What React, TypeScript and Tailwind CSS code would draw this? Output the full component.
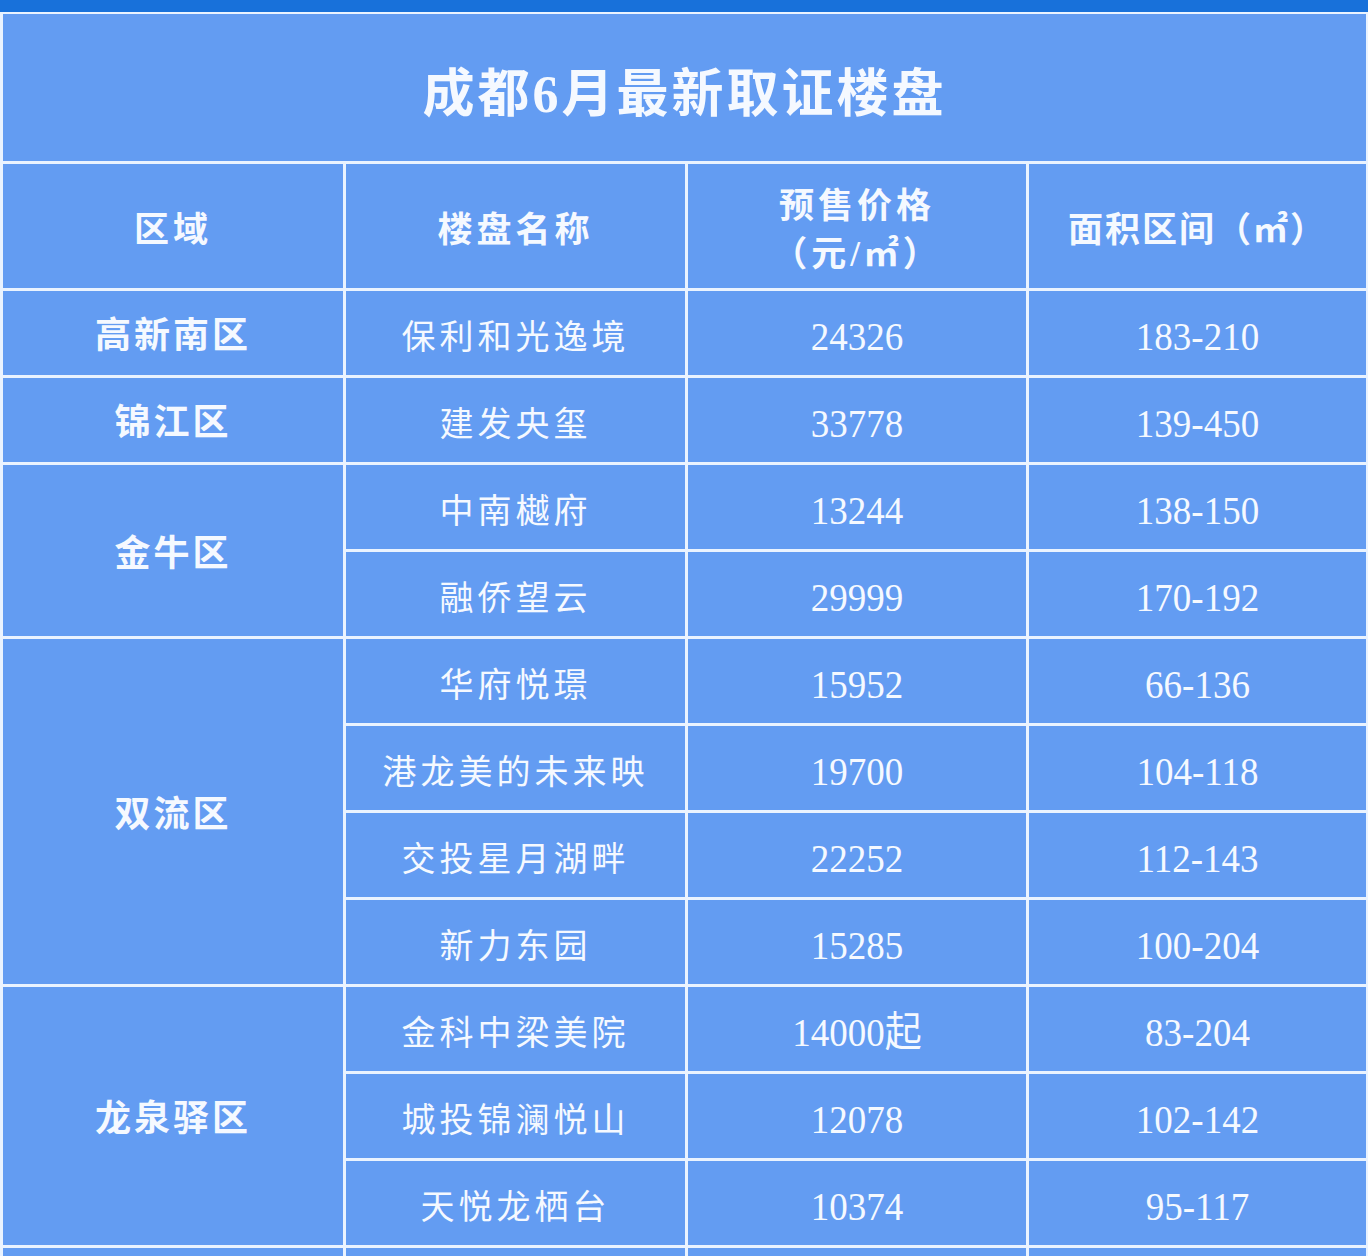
import React from 'react';

type Row = { name: string; price: string; area: string };
type Group = { region: string; rows: Row[] };

const groups: Group[] = [
  { region: '高新南区', rows: [{ name: '保利和光逸境', price: '24326', area: '183-210' }] },
  { region: '锦江区', rows: [{ name: '建发央玺', price: '33778', area: '139-450' }] },
  {
    region: '金牛区',
    rows: [
      { name: '中南樾府', price: '13244', area: '138-150' },
      { name: '融侨望云', price: '29999', area: '170-192' },
    ],
  },
  {
    region: '双流区',
    rows: [
      { name: '华府悦璟', price: '15952', area: '66-136' },
      { name: '港龙美的未来映', price: '19700', area: '104-118' },
      { name: '交投星月湖畔', price: '22252', area: '112-143' },
      { name: '新力东园', price: '15285', area: '100-204' },
    ],
  },
  {
    region: '龙泉驿区',
    rows: [
      { name: '金科中梁美院', price: '14000起', area: '83-204' },
      { name: '城投锦澜悦山', price: '12078', area: '102-142' },
      { name: '天悦龙栖台', price: '10374', area: '95-117' },
    ],
  },
];

const font = { fontFamily: '"Liberation Serif", "Noto Sans CJK SC", serif' };

const cell = 'bg-[#639cf2] flex items-center justify-center text-[#f5f9ff]';

export default function App() {
  let rowStart = 3;
  return (
    <div className="w-[1368px] h-[1256px] overflow-hidden bg-[#eaf3ff]" style={font}>
      <div className="h-[12px] bg-[#1871da]" />
      <div className="grid grid-cols-[340px_339px_338px_337px] grid-rows-[147px_124px_repeat(12,84px)] gap-[3px] p-[3px] pt-[2px]">
        {/* Title */}
        <div className={`${cell} col-span-4 text-[52px] font-bold tracking-[3px] pt-[14px]`}>
          成都6月最新取证楼盘
        </div>

        {/* Header */}
        <div className={`${cell} text-[35px] font-bold tracking-[4px] pt-[10px]`}>区域</div>
        <div className={`${cell} text-[35px] font-bold tracking-[4px] pt-[10px]`}>楼盘名称</div>
        <div className={`${cell} text-[35px] font-bold tracking-[4px] flex-col leading-[48px] pt-[10px]`}>
          <span>预售价格</span>
          <span>（元/㎡）</span>
        </div>
        <div className={`${cell} text-[35px] font-bold tracking-[2px] pt-[10px]`}>面积区间（㎡）</div>

        {/* Data */}
        {groups.map((g) => {
          const start = rowStart;
          rowStart += g.rows.length;
          return (
            <React.Fragment key={g.region}>
              <div
                className={`${cell} col-start-1 text-[36px] font-bold tracking-[3px] pt-[6px]`}
                style={{ gridRow: `${start} / span ${g.rows.length}` }}
              >
                {g.region}
              </div>
              {g.rows.map((r, i) => (
                <React.Fragment key={r.name}>
                  <div
                    className={`${cell} col-start-2 text-[34px] tracking-[4px] pt-[8px]`}
                    style={{ gridRow: start + i }}
                  >
                    {r.name}
                  </div>
                  <div className={`${cell} col-start-3 text-[37px] pt-[8px]`} style={{ gridRow: start + i }}>
                    <span className="inline-block scale-y-[1.1]">{r.price}</span>
                  </div>
                  <div className={`${cell} col-start-4 text-[37px] pt-[8px]`} style={{ gridRow: start + i }}>
                    <span className="inline-block scale-y-[1.1]">{r.area}</span>
                  </div>
                </React.Fragment>
              ))}
            </React.Fragment>
          );
        })}
        <div className={cell} />
        <div className={cell} />
        <div className={cell} />
        <div className={cell} />
      </div>
    </div>
  );
}
